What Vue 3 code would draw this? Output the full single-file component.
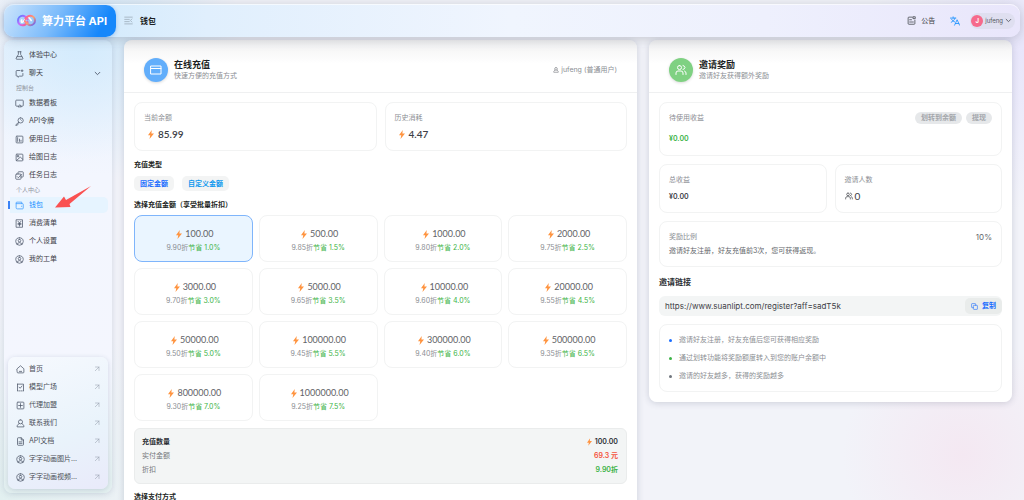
<template>
  <div class="app">
    <header class="topbar">
      <a class="brand" href="#">
        <svg class="brand-mark" viewBox="0 0 36 24" aria-hidden="true">
          <defs>
            <linearGradient id="loop-a" x1="0" y1="0" x2="1" y2="1">
              <stop offset="0" stop-color="#4f7dff" />
              <stop offset="0.5" stop-color="#c86bff" />
              <stop offset="1" stop-color="#ff5f7a" />
            </linearGradient>
            <linearGradient id="loop-b" x1="0" y1="0" x2="1" y2="1">
              <stop offset="0" stop-color="#ff4f9a" />
              <stop offset="0.5" stop-color="#ffa26b" />
              <stop offset="1" stop-color="#5b5bff" />
            </linearGradient>
          </defs>
          <path d="M27 12C24 7 21 4 17 8L12 14C9 17 7 14 9 11" stroke="#fff" class="thin" />
          <path d="M20 15C17 20 13 21 10 21C5 21 2 17 2 12C2 7 6 3 11 3C16 3 18 7 20 10" stroke="url(#loop-a)" />
          <path d="M16 9C19 4 22 3 25 3C30 3 34 7 34 12C34 17 30 21 25 21C20 21 18 17 15 13" stroke="url(#loop-b)" />
        </svg>
        <span>算力平台 API</span>
      </a>
      <button class="plain fold" aria-label="收起菜单">
        <svg viewBox="0 0 24 24"><path d="M2 3H22M2 9H14M2 15H14M2 21H22M21 8L17 12L21 16" /></svg>
      </button>
      <h1>钱包</h1>
      <div class="top-actions">
        <button class="plain notice">
          <svg viewBox="0 0 24 24"><path d="M14 3H5Q3 3 3 5V20Q3 22 5 22H19Q21 22 21 20V11M7 10H12M7 16H17M17 2H22V7H17Z" /></svg>
          公告
        </button>
        <button class="plain lang" aria-label="语言">
          <svg viewBox="0 0 24 24"><path d="M1 5H14M7.500 2V5M3 15C8 13 11 9 12 5M4 8C5 11 8 13 11 14M11 22L17 9L23 22M13 18H21" /></svg>
        </button>
        <button class="plain user">
          <span class="avatar">J</span>
          jufeng
          <svg viewBox="0 0 24 24"><path d="M4 8L12 16L20 8" /></svg>
        </button>
      </div>
    </header>

    <div class="body">
      <aside class="sidebar">
        <nav>
          <template v-for="group in menu" :key="group.title">
            <p v-if="group.title" class="group-title">{{ group.title }}</p>
            <a
              v-for="item in group.items"
              :key="item.name"
              href="#"
              class="nav-item"
              :class="{ active: item.name === current }"
              @click.prevent="current = item.name"
            >
              <svg viewBox="0 0 24 24"><path :d="icons[item.icon]" /></svg>
              <span>{{ item.name }}</span>
              <svg v-if="item.more" class="chevron" viewBox="0 0 24 24"><path d="M4 8L12 16L20 8" /></svg>
            </a>
          </template>
        </nav>
        <nav class="links">
          <a v-for="link in links" :key="link.name" href="#" class="nav-item">
            <svg viewBox="0 0 24 24"><path :d="icons[link.icon]" /></svg>
            <span>{{ link.name }}</span>
            <svg class="out" viewBox="0 0 24 24"><path d="M6 4H20V18M20 4L5 19" /></svg>
          </a>
        </nav>
      </aside>

      <main>
        <!-- 在线充值 -->
        <section class="card recharge">
          <div class="card-head">
            <span class="badge blue">
              <svg viewBox="0 0 24 24"><path d="M2 4H22V20H2ZM2 9H22" /></svg>
            </span>
            <div>
              <h2>在线充值</h2>
              <p>快速方便的充值方式</p>
            </div>
            <span class="account">
              <svg viewBox="0 0 24 24"><path :d="icons.person" /></svg>
              jufeng (普通用户)
            </span>
          </div>
          <div class="card-body">
            <div class="pair">
              <div v-for="stat in stats" :key="stat.label" class="box stat">
                <p class="label">{{ stat.label }}</p>
                <p class="balance">
                  <svg class="bolt" viewBox="0 0 16 24"><path :d="bolt" /></svg>{{ stat.value }}
                </p>
              </div>
            </div>
            <h3>充值类型</h3>
            <div class="types">
              <button class="fixed">固定金额</button>
              <button class="custom">自定义金额</button>
            </div>
            <h3>选择充值金额（享受批量折扣）</h3>
            <div class="amounts">
              <button
                v-for="plan in plans"
                :key="plan.amount"
                class="amount"
                :class="{ selected: plan.amount === selected }"
                @click="selected = plan.amount"
              >
                <span class="value">
                  <svg class="bolt" viewBox="0 0 16 24"><path :d="bolt" /></svg>{{ plan.amount }}
                </span>
                <span class="rate">{{ plan.rate }}折<em>节省 {{ plan.save }}%</em></span>
              </button>
            </div>
            <dl class="summary">
              <div class="strong">
                <dt>充值数量</dt>
                <dd><svg class="bolt" viewBox="0 0 16 24"><path :d="bolt" /></svg>100.00</dd>
              </div>
              <div>
                <dt>实付金额</dt>
                <dd class="red">69.3 元</dd>
              </div>
              <div>
                <dt>折扣</dt>
                <dd class="green">9.90折</dd>
              </div>
            </dl>
            <h3>选择支付方式</h3>
          </div>
        </section>

        <!-- 邀请奖励 -->
        <section class="card invite">
          <div class="card-head">
            <span class="badge mint">
              <svg viewBox="0 0 24 24"><path :d="icons.group" /></svg>
            </span>
            <div>
              <h2>邀请奖励</h2>
              <p>邀请好友获得额外奖励</p>
            </div>
          </div>
          <div class="card-body">
            <div class="box pending">
              <div class="row">
                <p class="label">待使用收益</p>
                <button disabled>划转到余额</button>
                <button disabled>提现</button>
              </div>
              <p class="money green">¥0.00</p>
            </div>
            <div class="pair">
              <div class="box stat">
                <p class="label">总收益</p>
                <p class="money">¥0.00</p>
              </div>
              <div class="box stat">
                <p class="label">邀请人数</p>
                <p class="people">
                  <svg viewBox="0 0 24 24"><path :d="icons.group" /></svg>0
                </p>
              </div>
            </div>
            <div class="box ratio">
              <div class="row">
                <p class="label">奖励比例</p>
                <span>10%</span>
              </div>
              <p>邀请好友注册，好友充值前3次，您可获得返现。</p>
            </div>
            <label class="link-title" for="invite-link">邀请链接</label>
            <div class="copy-field">
              <input id="invite-link" type="text" readonly value="https://www.suanlipt.com/register?aff=sadT5k" />
              <button>
                <svg viewBox="0 0 24 24"><path d="M8 10Q8 8 10 8H20Q22 8 22 10V20Q22 22 20 22H10Q8 22 8 20ZM16 8V4Q16 2 14 2H4Q2 2 2 4V14Q2 16 4 16H8" /></svg>
                复制
              </button>
            </div>
            <ul class="box tips">
              <li class="tip-blue">邀请好友注册，好友充值后您可获得相应奖励</li>
              <li class="tip-green">通过划转功能将奖励额度转入到您的账户余额中</li>
              <li class="tip-gray">邀请的好友越多，获得的奖励越多</li>
            </ul>
          </div>
        </section>
      </main>
    </div>

    <svg class="pointer" viewBox="0 0 36 22" aria-hidden="true">
      <path d="M0 21.500L9 10.500L11 14L36 0L14.500 18L15.500 21Z" />
    </svg>
  </div>
</template>

<script setup>
import { ref } from 'vue'

const current = ref('钱包')
const selected = ref('100.00')

const bolt = 'M10 0L0 14H6L4 24L16 9H9Z'

// 图标路径，统一 24x24 画布
const circleUser =
  'M12 2A10 10 0 1 0 12 22A10 10 0 1 0 12 2M12 6A3.500 3.500 0 1 0 12 13A3.500 3.500 0 1 0 12 6M6 19Q6 15 12 15Q18 15 18 19'

const icons = {
  flask: 'M8 2H16M9 2V9L3 19Q2 22 5 22H19Q22 22 21 19L15 9V2M6 15H18',
  chat: 'M13 4H5Q3 4 3 6V17Q3 19 5 19H8V22L12 19H19Q21 19 21 17V12M18 3H21V6H18Z',
  board: 'M8 19H4Q2 19 2 17V5Q2 3 4 3H20Q22 3 22 5V17Q22 19 20 19H16M12 16L8 21H16Z',
  key: 'M15 2A7 7 0 1 0 15 16A7 7 0 1 0 15 2M10 14L2 21V22H6L9 18M15 7L17 9',
  chart: 'M5 3H19Q21 3 21 5V19Q21 21 19 21H5Q3 21 3 19V5Q3 3 5 3M7 7V17M12 11V17M16 14V17',
  image: 'M5 3H19Q21 3 21 5V19Q21 21 19 21H5Q3 21 3 19V5Q3 3 5 3M7 7H10V10H7ZM4 20L14 11L21 17',
  task: 'M8 8V4Q8 2 10 2H20Q22 2 22 4V14Q22 16 20 16H16M4 8H14Q16 8 16 10V20Q16 22 14 22H4Q2 22 2 20V10Q2 8 4 8M6 15L9 18L17 9',
  wallet: 'M3 7V18Q3 21 6 21H20Q22 21 22 19V9Q22 7 20 7H3Q2 3 5 3H18V7M17 14H18',
  bill: 'M4 2H20V22H4ZM8 6L12 11L16 6M12 11V19M8 12H16M8 15H16',
  user: circleUser,
  home: 'M3 10L12 2L21 10V19Q21 21 19 21H5Q3 21 3 19ZM9 17H15',
  market: 'M4 3H20V20M4 3V20M4 21H6M9 21H11M14 21H16M19 21H20M8 11L11 14L16 8',
  plus: 'M5 3H19Q21 3 21 5V19Q21 21 19 21H5Q3 21 3 19V5Q3 3 5 3M12 7V17M7 12H17',
  person: 'M12 2A5.500 5.500 0 1 0 12 13A5.500 5.500 0 1 0 12 2M8 12L3 18V21H21V18L16 12',
  doc: 'M14 2H6Q4 2 4 4V20Q4 22 6 22H18Q20 22 20 20V8L14 2V8H20M8 13H16M8 17H16',
  group: 'M9 3A4 4 0 1 0 9 11A4 4 0 1 0 9 3M2 21V18Q2 14 6 14H12Q16 14 16 18V21M16 3Q20 4 20 7Q20 10 16 11M19 14Q22 15 22 18V21'
}

const menu = [
  {
    title: '',
    items: [
      { name: '体验中心', icon: 'flask' },
      { name: '聊天', icon: 'chat', more: true }
    ]
  },
  {
    title: '控制台',
    items: [
      { name: '数据看板', icon: 'board' },
      { name: 'API令牌', icon: 'key' },
      { name: '使用日志', icon: 'chart' },
      { name: '绘图日志', icon: 'image' },
      { name: '任务日志', icon: 'task' }
    ]
  },
  {
    title: '个人中心',
    items: [
      { name: '钱包', icon: 'wallet' },
      { name: '消费清单', icon: 'bill' },
      { name: '个人设置', icon: 'user' },
      { name: '我的工单', icon: 'user' }
    ]
  }
]

const links = [
  { name: '首页', icon: 'home' },
  { name: '模型广场', icon: 'market' },
  { name: '代理加盟', icon: 'plus' },
  { name: '联系我们', icon: 'person' },
  { name: 'API文档', icon: 'doc' },
  { name: '字字动画图片...', icon: 'user' },
  { name: '字字动画视频...', icon: 'user' }
]

const stats = [
  { label: '当前余额', value: '85.99' },
  { label: '历史消耗', value: '4.47' }
]

const plans = [
  { amount: '100.00', rate: '9.90', save: '1.0' },
  { amount: '500.00', rate: '9.85', save: '1.5' },
  { amount: '1000.00', rate: '9.80', save: '2.0' },
  { amount: '2000.00', rate: '9.75', save: '2.5' },
  { amount: '3000.00', rate: '9.70', save: '3.0' },
  { amount: '5000.00', rate: '9.65', save: '3.5' },
  { amount: '10000.00', rate: '9.60', save: '4.0' },
  { amount: '20000.00', rate: '9.55', save: '4.5' },
  { amount: '50000.00', rate: '9.50', save: '5.0' },
  { amount: '100000.00', rate: '9.45', save: '5.5' },
  { amount: '300000.00', rate: '9.40', save: '6.0' },
  { amount: '500000.00', rate: '9.35', save: '6.5' },
  { amount: '800000.00', rate: '9.30', save: '7.0' },
  { amount: '1000000.00', rate: '9.25', save: '7.5' }
]
</script>

<style>
body {
  overflow: hidden;
}
</style>

<style scoped>
.app {
  position: relative;
  display: flex;
  flex-direction: column;
  gap: 3px;
  height: 100vh;
  padding: 4px 4px 0;
  box-sizing: border-box;
  overflow: hidden;
  font-family: Inter, "Noto Sans CJK SC", sans-serif;
  font-size: 7px;
  line-height: 12px;
  color: #3d4046;
  background:
    radial-gradient(circle at 94% 91%, #f4e8f2 0, rgba(244, 232, 242, 0) 120px),
    radial-gradient(circle at 100% 10%, #e8e6fb 0, rgba(232, 230, 251, 0) 160px),
    radial-gradient(circle at 0 100%, #e2f0f0 0, rgba(226, 240, 240, 0) 200px),
    radial-gradient(circle at 10% 8%, #d3e8f8 0, rgba(211, 232, 248, 0) 140px),
    #f2f3f9;
}

h1, h2, h3, p, ul, dl, dd {
  margin: 0;
  padding: 0;
}

button, input {
  padding: 0;
  border: 0;
  font: inherit;
  color: inherit;
  background: none;
}

button {
  cursor: pointer;
}

a {
  color: inherit;
  text-decoration: none;
}

svg {
  flex: none;
  width: 9px;
  height: 9px;
  fill: none;
  stroke: currentColor;
  stroke-width: 2;
  stroke-linecap: round;
  stroke-linejoin: round;
}

/* 顶部栏 */
.topbar {
  position: relative;
  z-index: 2;
  display: flex;
  align-items: center;
  flex: none;
  height: 33px;
  border-radius: 10px;
  background: linear-gradient(90deg, #d5ebfc 10%, #e0effd 20%, #f0f5fe 50%, #eef0fd 75%, #e9e6fb);
  box-shadow: 0 2px 12px rgba(40, 50, 70, 0.24), inset 0 1px 0 rgba(255, 255, 255, 0.6);
}

.brand {
  display: flex;
  align-items: center;
  gap: 6px;
  width: 112px;
  height: 32px;
  padding-left: 13px;
  box-sizing: border-box;
  border-radius: 10px;
  font-size: 11px;
  font-weight: 700;
  color: #fff;
  white-space: nowrap;
  background: linear-gradient(120deg, #cde5fc, #7dbcfb 45%, #1687fb 85%);
  box-shadow: 0 1px 4px rgba(30, 100, 200, 0.3);
}

.brand-mark {
  width: 19px;
  height: 13px;
  stroke-width: 4;
}

.thin {
  stroke-width: 3;
}

.plain {
  display: flex;
  align-items: center;
}

.fold {
  margin-left: 8px;
  color: #9aa8b5;
}

h1 {
  margin-left: 7px;
  font-size: 8px;
  font-weight: 700;
  color: #1c1f23;
}

.top-actions {
  display: flex;
  align-items: center;
  gap: 15px;
  margin-left: auto;
  padding-right: 5px;
}

.notice {
  gap: 5px;
}

.lang {
  color: #1890ff;
}

.lang svg {
  width: 10px;
  height: 10px;
}

.user {
  gap: 2px;
  height: 16px;
  padding: 0 3px 0 1px;
  margin-left: -5px;
  border-radius: 8px;
  font-size: 6px;
  color: #55585f;
  background: #dfdff0;
}

.user svg {
  width: 7px;
  height: 7px;
  stroke-width: 3;
}

.avatar {
  width: 12px;
  height: 12px;
  border-radius: 50%;
  font-weight: 700;
  text-align: center;
  color: #fff;
  background: #f66a8c;
}

/* 侧边栏 */
.body {
  display: flex;
  flex: 1;
  gap: 12px;
  min-height: 0;
}

.sidebar {
  display: flex;
  flex-direction: column;
  justify-content: space-between;
  flex: none;
  width: 108px;
  margin-bottom: 7px;
  padding: 6px 4px 4px;
  box-sizing: border-box;
  border-radius: 8px;
  background:
    radial-gradient(circle at 70% 0, rgba(208, 234, 253, 0.9) 0, rgba(208, 234, 253, 0) 120px),
    linear-gradient(180deg, #e7f1fc, #f3f6fe 30%, #f4f6fe 75%, #e3f0f0);
  box-shadow: 0 1px 6px rgba(60, 80, 120, 0.18);
}

.nav-item {
  display: flex;
  align-items: center;
  gap: 5px;
  height: 16px;
  margin: 1px 0;
  padding: 0 7px;
  border-radius: 5px;
}

.nav-item + .nav-item {
  margin-top: 2px;
}

.nav-item svg {
  color: #4c5568;
}

.nav-item .chevron {
  width: 7px;
  height: 7px;
  margin-left: auto;
  stroke-width: 3;
}

.group-title {
  padding-left: 8px;
  font-size: 6px;
  line-height: 12px;
  color: #90959e;
}

.nav-item.active {
  color: #1890ff;
  background:
    linear-gradient(#3b82f6, #3b82f6) 0 50% / 2px 8px no-repeat,
    linear-gradient(#e6f4ff, #e6f4ff) 2px 0 no-repeat;
  border-radius: 0 5px 5px 0;
}

.nav-item.active svg {
  color: #3b9bff;
}

.links {
  padding: 3px 0;
  border-radius: 7px;
  background: linear-gradient(160deg, #f6f9fe, #e9f3fb 60%, #e9eafa);
  box-shadow: 0 1px 5px rgba(60, 80, 120, 0.2);
}

.links .nav-item {
  padding: 0 8px;
  gap: 4px;
  color: #4b4f58;
}

.links .out {
  width: 6px;
  height: 6px;
  margin-left: auto;
  color: #8d96a5;
}

/* 卡片 */
main {
  display: flex;
  align-items: flex-start;
  flex: 1;
  gap: 12px;
  min-width: 0;
  padding-right: 8px;
}

.card {
  min-width: 0;
  border-radius: 8px;
  background: linear-gradient(180deg, #f1f1f2, #fff 24px);
  box-shadow: 0 1px 7px rgba(50, 60, 90, 0.2);
}

.recharge {
  flex: 513;
}

.invite {
  flex: 363;
}

.card-head {
  display: flex;
  align-items: center;
  gap: 6px;
  height: 53px;
  padding: 8px 20px 0;
  box-sizing: border-box;
  border-bottom: 1px solid #eff0f1;
}

.badge {
  display: flex;
  align-items: center;
  justify-content: center;
  width: 24px;
  height: 24px;
  border-radius: 50%;
  color: #fff;
  box-shadow: 0 1px 3px rgba(0, 0, 0, 0.15);
}

.badge svg {
  width: 12px;
  height: 12px;
}

.badge.blue {
  background: #62aefb;
}

.badge.mint {
  background: #7fd182;
}

h2 {
  font-size: 9px;
  line-height: 12px;
  font-weight: 700;
  color: #1c1f23;
}

.card-head p {
  line-height: 10px;
  color: #8b8e93;
}

.account {
  display: flex;
  align-items: center;
  gap: 2px;
  margin-left: auto;
  color: #8b8e93;
}

.account svg {
  width: 6px;
  height: 6px;
  stroke-width: 3;
}

.card-body {
  padding: 9px 10px 10px;
}

.pair {
  display: grid;
  grid-template-columns: 1fr 1fr;
  gap: 8px;
}

.box {
  padding: 9px;
  border: 1px solid #f2f3f3;
  border-radius: 8px;
}

.stat {
  height: 29px;
}

.label {
  color: #8b8e93;
}

.bolt {
  width: 6px;
  height: 9px;
  fill: #ff9440;
  stroke: none;
}

.balance {
  display: flex;
  align-items: center;
  gap: 4px;
  margin-top: 4px;
  padding-left: 4px;
  font-family: Lato, sans-serif;
  font-size: 10px;
  font-weight: 600;
}

h3 {
  margin-top: 8px;
  font-size: 7px;
  line-height: 12px;
  font-weight: 700;
  color: #1c1f23;
}

.types {
  display: flex;
  gap: 8px;
  margin-top: 5px;
}

.types button {
  height: 15px;
  padding: 0 6px;
  border-radius: 5px;
  font-weight: 700;
  background: #f3f4f4;
}

.fixed {
  color: #1a6dff;
}

.custom {
  color: #0f98ee;
}

.amounts {
  display: grid;
  grid-template-columns: repeat(4, 1fr);
  gap: 6px;
  margin-top: 4px;
}

.amount {
  display: flex;
  flex-direction: column;
  align-items: center;
  justify-content: center;
  gap: 2px;
  height: 47px;
  padding-top: 5px;
  border: 1px solid #f2f3f3;
  border-radius: 8px;
}

.amount.selected {
  border-color: #7fb5fb;
  background: #eaf5ff;
}

.value {
  display: flex;
  align-items: center;
  gap: 3px;
  padding-left: 3px;
  font-family: Lato, sans-serif;
  font-size: 9px;
  color: #5f6267;
}

.rate {
  color: #8b8e93;
}

.rate em {
  font-style: normal;
  color: #3bb346;
}

.summary {
  margin-top: 7px;
  padding: 6px 8px 6px 7px;
  border: 1px solid #eaecec;
  border-radius: 6px;
  background: #f3f5f5;
}

.summary div {
  display: flex;
  align-items: center;
  justify-content: space-between;
  height: 14px;
  color: #74777c;
}

.summary .strong {
  font-weight: 700;
  color: #2c2f34;
}

.summary + h3 {
  margin-top: 7px;
}

dd {
  display: flex;
  align-items: center;
  gap: 3px;
  font-weight: 600;
}

dd .bolt {
  width: 5px;
  height: 8px;
}

.summary .red {
  color: #f5513a;
}

.summary .green,
.green {
  color: #3bb346;
}

/* 邀请奖励 */
.row {
  display: flex;
  align-items: center;
  gap: 4px;
}

.row .label {
  flex: 1;
}

.pending {
  height: 34px;
  margin-bottom: 8px;
}

.pending button {
  height: 12px;
  padding: 0 6px;
  border-radius: 6px;
  font-weight: 600;
  line-height: 12px;
  color: #a3a6aa;
  background: #e6e8ea;
}

.money {
  margin-top: 5px;
  font-weight: 600;
}

.pending .money {
  margin-top: 9px;
}

.people {
  display: flex;
  align-items: center;
  gap: 2px;
  margin-top: 4px;
  font-family: Lato, sans-serif;
  font-size: 10px;
}

.people svg {
  width: 8px;
  height: 8px;
}

.ratio {
  margin-top: 8px;
  height: 26px;
  color: #63666b;
}

.ratio .row {
  margin-bottom: 2px;
}

.ratio .row span {
  font-size: 8px;
}

.link-title {
  display: block;
  margin: 10px 0 8px;
  font-size: 8px;
  line-height: 11px;
  font-weight: 700;
  color: #2c2f34;
}

.copy-field {
  display: flex;
  align-items: center;
  height: 20px;
  border-radius: 6px;
  background: #f3f5f5;
}

.copy-field input {
  flex: 1;
  min-width: 0;
  padding-left: 6px;
  font-size: 8px;
  outline: none;
}

.copy-field button {
  display: flex;
  align-items: center;
  gap: 4px;
  height: 16px;
  padding: 0 6px;
  border-radius: 5px;
  font-weight: 700;
  color: #1a6dff;
  background: #e9eceb;
}

.copy-field svg {
  width: 7px;
  height: 7px;
}

.tips {
  margin-top: 8px;
  padding: 6px 9px;
  list-style: none;
  color: #8b8e93;
}

.tips li {
  display: flex;
  align-items: center;
  gap: 7px;
  height: 18px;
}

.tips li::before {
  content: "";
  width: 3px;
  height: 3px;
  border-radius: 50%;
  background: #70757d;
}

.tips .tip-blue::before {
  background: #1a6dff;
}

.tips .tip-green::before {
  background: #3bb346;
}

/* 指向当前菜单的箭头 */
.pointer {
  position: absolute;
  left: 55px;
  top: 186px;
  width: 36px;
  height: 22px;
  fill: #fa5151;
  stroke: none;
}
</style>
